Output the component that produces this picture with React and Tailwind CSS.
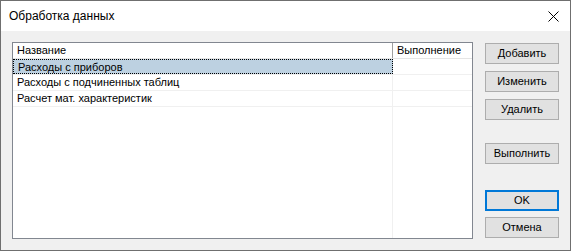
import React from "react";

const rows = ["Расходы с приборов", "Расходы с подчиненных таблиц", "Расчет мат. характеристик"];

const Btn = ({ children, className = "", focused }) => (
  <button
    className={`w-[74px] h-[21px] flex items-center justify-center bg-[#e1e1e1] text-[11px] leading-none text-black ${
      focused ? "border-2 border-[#0078d7]" : "border border-[#adadad]"
    } ${className}`}
  >
    {children}
  </button>
);

export default function App() {
  return (
    <div className="w-[571px] h-[251px] flex flex-col border border-[#6f6f6f] bg-[#f0f0f0] font-['Liberation_Sans',Arial,sans-serif] text-black">
      <div className="h-[30px] shrink-0 bg-white flex items-center justify-between pl-[8px] pr-[10px]">
        <span className="text-[12px]">Обработка данных</span>
        <svg width="11" height="11" viewBox="0 0 11 11" className="mr-[1px]">
          <path d="M0.5 0.5 L10.5 10.5 M10.5 0.5 L0.5 10.5" stroke="#000" strokeWidth="1" />
        </svg>
      </div>
      <div className="flex pl-[11px] pt-[11px]">
        <div className="w-[461px] h-[197px] border border-[#828790] bg-white text-[11px]">
          <div className="flex h-[16px] border-b border-[#e5e5e5] leading-[15px]">
            <div className="w-[380px] border-r border-[#a0a0a0] pl-[4px]">Название</div>
            <div className="flex-1 pl-[4px]">Выполнение</div>
          </div>
          {rows.map((r, i) => (
            <div key={r} className="flex h-[16px] border-b border-[#f0f0f0] leading-[14px]">
              <div
                className={`w-[380px] pl-[4px] ${
                  i === 0 ? "bg-[#bdd1e1] border border-dotted border-black pl-[3px]" : "border-r border-[#f0f0f0]"
                }`}
              >
                {r}
              </div>
              <div className="flex-1" />
            </div>
          ))}
          <div className="flex h-[131px]">
            <div className="w-[380px] border-r border-[#f0f0f0]" />
          </div>
        </div>
        <div className="flex flex-col ml-[12px] pt-[1px]">
          <Btn>Добавить</Btn>
          <Btn className="mt-[7px]">Изменить</Btn>
          <Btn className="mt-[7px]">Удалить</Btn>
          <Btn className="mt-[23px]">Выполнить</Btn>
          <Btn className="mt-[26px]" focused>OK</Btn>
          <Btn className="mt-[6px]">Отмена</Btn>
        </div>
      </div>
    </div>
  );
}
